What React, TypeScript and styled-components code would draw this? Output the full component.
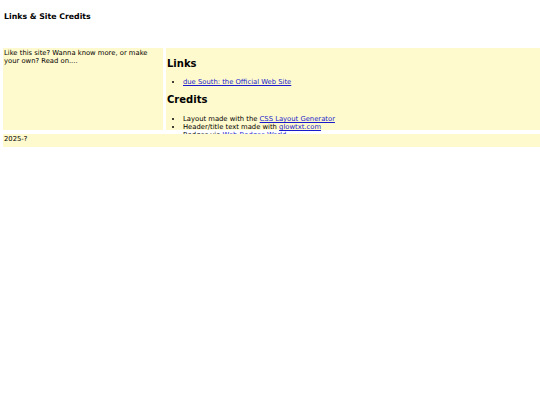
import React from 'react';
import styled, { createGlobalStyle } from 'styled-components';

const GlobalStyle = createGlobalStyle`
  body {
    margin: 0;
    background: #fff;
    font-family: "DejaVu Sans", Verdana, sans-serif;
    color: #000;
  }
`;

const Page = styled.div`
  padding-left: 3px;
`;

const Header = styled.div`
  height: 48px;
  padding: 12px 1px 0;
  box-sizing: border-box;
`;

const Title = styled.h1`
  margin: 0;
  font-size: 7.8px;
  font-weight: bold;
`;

const Columns = styled.div`
  display: flex;
  gap: 3px;
  height: 82px;
`;

const Sidebar = styled.div`
  background: #fffacd;
  width: 160px;
  flex: none;
  box-sizing: border-box;
  padding: 1px;
  font-size: 6.8px;
  line-height: 8px;
`;

const Content = styled.div`
  background: #fffacd;
  flex: 1;
  padding: 1px;
  font-size: 6.8px;
`;

const Heading = styled.h2`
  margin: 9px 0 8px;
  font-size: 10px;
  line-height: 12px;
`;

const List = styled.ul`
  margin: 0;
  padding-left: 16px;
  line-height: 8px;

  & + h2 {
    margin-top: 8px;
    margin-bottom: 9px;
  }
`;

const Link = styled.a`
  color: #1a1acc;
`;

const Footer = styled.div`
  position: relative;
  margin-top: 4px;
  height: 13px;
  padding: 1px 1px 0;
  box-sizing: border-box;
  background: #fffacd;
  font-size: 6.8px;
`;

export default function App() {
  return (
    <Page>
      <GlobalStyle />
      <Header>
        <Title>Links &amp; Site Credits</Title>
      </Header>
      <Columns>
        <Sidebar>Like this site? Wanna know more, or make your own? Read on....</Sidebar>
        <Content>
          <Heading>Links</Heading>
          <List>
            <li>
              <Link href="#">due South: the Official Web Site</Link>
            </li>
          </List>
          <Heading>Credits</Heading>
          <List>
            <li>
              Layout made with the <Link href="#">CSS Layout Generator</Link>
            </li>
            <li>
              Header/title text made with <Link href="#">glowtxt.com</Link>
            </li>
            <li>
              Badges via <Link href="#">Web Badges World</Link>
            </li>
          </List>
        </Content>
      </Columns>
      <Footer>2025-?</Footer>
    </Page>
  );
}
